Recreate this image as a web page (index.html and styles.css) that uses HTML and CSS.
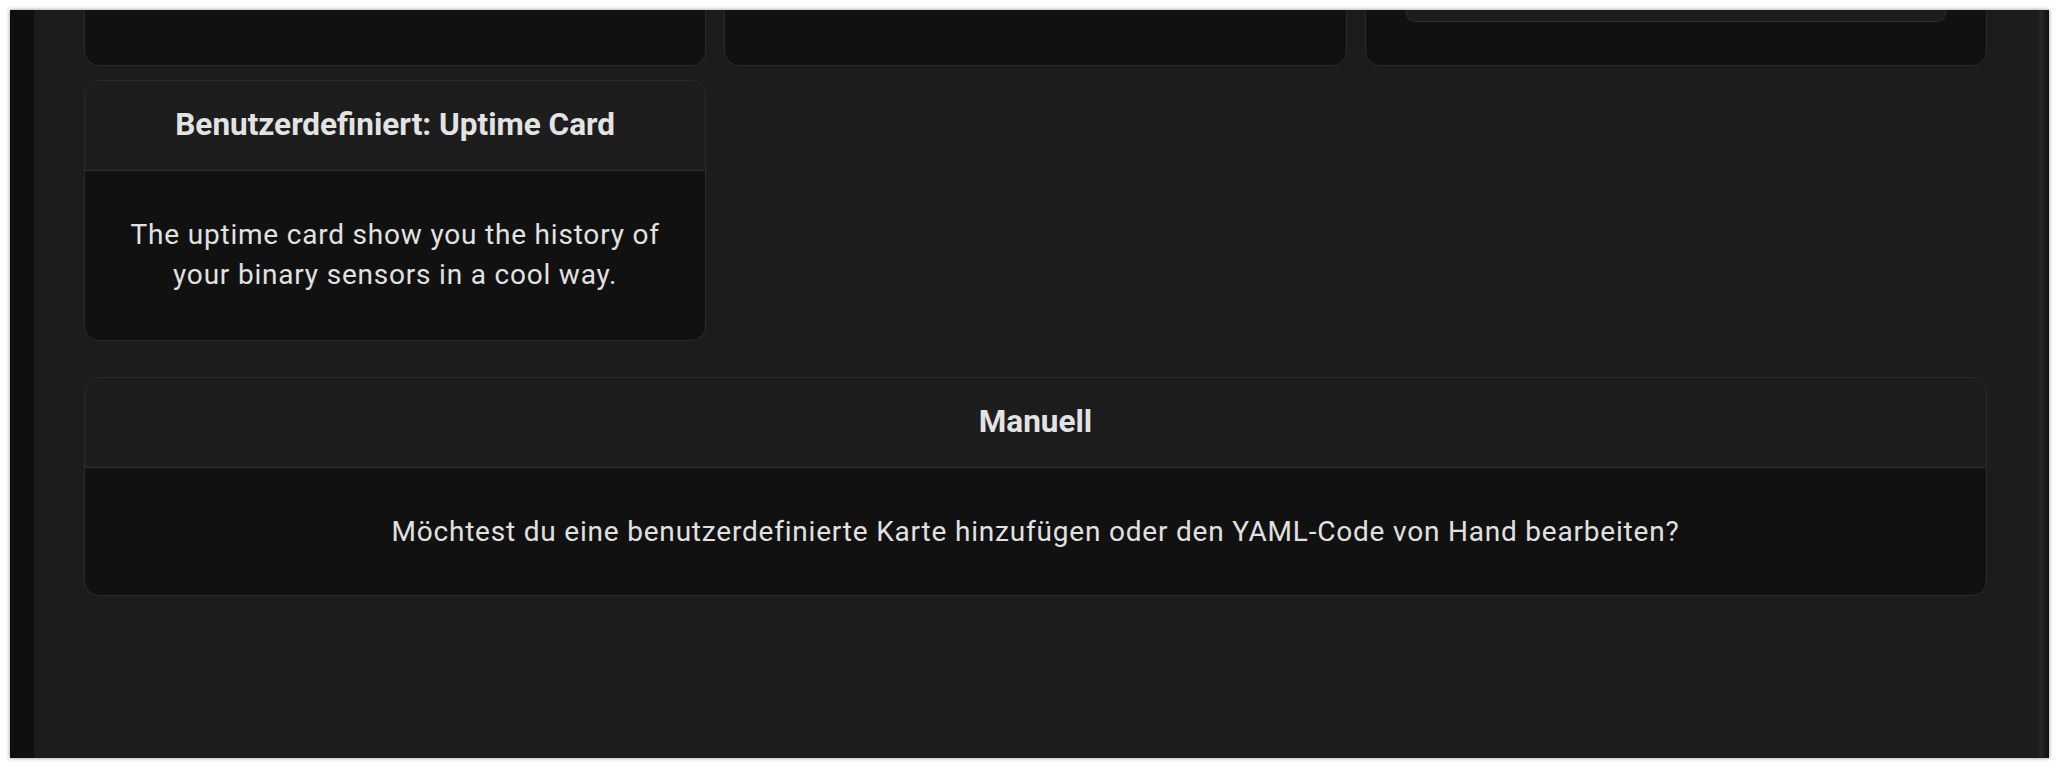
FILE: index.html
```html
<!DOCTYPE html>
<html lang="de">
<head>
    <meta charset="UTF-8">
    <meta name="viewport" content="width=device-width, initial-scale=1.0">
    <title>Karte hinzufügen</title>
    <link rel="stylesheet" href="styles.css">
</head>
<body>
    <div class="frame">
        <div class="app">
            <div class="side-strip"></div>

            <main class="picker">
                <div class="card-grid">
                    <div class="card card-cut"></div>
                    <div class="card card-cut"></div>
                    <div class="card card-cut">
                        <div class="inner-preview"></div>
                    </div>

                    <div class="card">
                        <div class="card-header">Benutzerdefiniert: Uptime Card</div>
                        <div class="card-body">The uptime card show you the history of your binary sensors in a cool way.</div>
                    </div>
                </div>

                <div class="card card-manual">
                    <div class="card-header">Manuell</div>
                    <div class="card-body">Möchtest du eine benutzerdefinierte Karte hinzufügen oder den YAML-Code von Hand bearbeiten?</div>
                </div>
            </main>

            <div class="scroll-strip"></div>
        </div>
    </div>
</body>
</html>
```

FILE: styles.css
```css
body {
    margin: 0;
    background: #ffffff;
    font-family: Roboto, "Noto Sans", sans-serif;
}
.frame {
    padding: 10px 9px 10px 10px;
}
.app {
    display: flex;
    height: 748px;
    background: #1c1c1c;
    box-shadow: 0 0 4px rgba(0, 0, 0, 0.45);
    overflow: hidden;
}
.side-strip {
    width: 24px;
    flex-shrink: 0;
    background: #0f0f0f;
}
.scroll-strip {
    width: 12px;
    flex-shrink: 0;
    background: linear-gradient(to right, #1c1c1c, #262626 40%, #1a1a1a 70%, #141414);
}
.picker {
    flex: 1;
    padding: 0 50px 0 50px;
}
.card-grid {
    display: grid;
    grid-template-columns: repeat(3, 1fr);
    column-gap: 18px;
    row-gap: 14px;
}
.card {
    border: 1px solid #2b2b2b;
    border-radius: 15px;
    background: #111111;
    overflow: hidden;
}
.card-cut {
    height: 55px;
    border-top: none;
    border-top-left-radius: 0;
    border-top-right-radius: 0;
}
.inner-preview {
    height: 11px;
    margin: 0 40px;
    background: #1c1c1c;
    border: 1px solid #2e2e2e;
    border-top: none;
    border-radius: 0 0 9px 9px;
}
.card-header {
    padding: 23px 21px;
    background: #1d1d1d;
    border-bottom: 1px solid #2e2e2e;
    color: #e3e3e3;
    font-size: 31.5px;
    font-weight: 700;
    line-height: 42.5px;
    text-align: center;
}
.card-body {
    padding: 44.5px 21px;
    color: #e1e1e1;
    font-size: 28px;
    letter-spacing: 0.8px;
    line-height: 40px;
    text-align: center;
}
.card-manual {
    margin-top: 36px;
}
.card-manual .card-header {
    padding: 23.5px 21px;
}
.card-manual .card-body {
    padding: 43.5px 21px;
}
```
